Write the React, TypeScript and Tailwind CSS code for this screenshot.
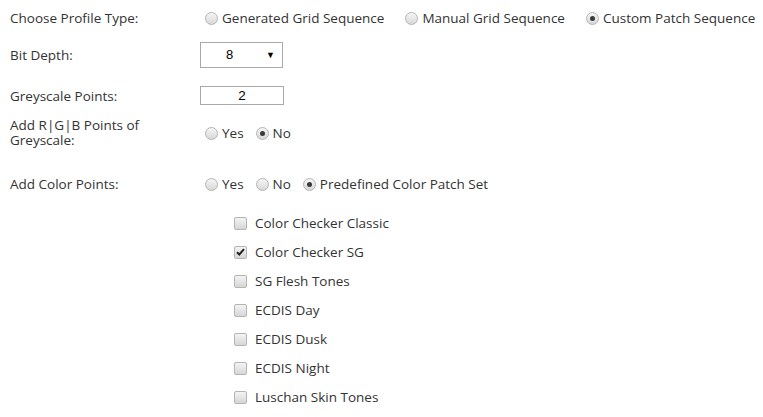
import React from "react";

function Radio({ checked }: { checked?: boolean }) {
  return (
    <span className="relative inline-block w-[13px] h-[13px] rounded-full border border-[#b4b4b4] bg-gradient-to-b from-[#f6f6f6] to-[#d8d8d8] shrink-0">
      {checked && (
        <span className="absolute left-[3px] top-[3px] w-[5px] h-[5px] rounded-full bg-[#3a3a3a]" />
      )}
    </span>
  );
}

function Check({ checked }: { checked?: boolean }) {
  return (
    <span className="relative inline-flex items-center justify-center w-[13px] h-[13px] rounded-[2px] border border-[#b4b4b4] bg-gradient-to-b from-[#f4f4f4] to-[#d6d6d6] shrink-0">
      {checked && (
        <svg width="9" height="8" viewBox="0 0 9 8">
          <path d="M1 4.2 L3.3 6.5 L8 1.2" stroke="#222" strokeWidth="2" fill="none" />
        </svg>
      )}
    </span>
  );
}

function RadioOpt({ label, checked, gap }: { label: string; checked?: boolean; gap: string }) {
  return (
    <span className={`inline-flex items-center gap-[4px] ${gap}`}>
      <Radio checked={checked} />
      <span>{label}</span>
    </span>
  );
}

export default function App() {
  const checks = [
    ["Color Checker Classic", false],
    ["Color Checker SG", true],
    ["SG Flesh Tones", false],
    ["ECDIS Day", false],
    ["ECDIS Dusk", false],
    ["ECDIS Night", false],
    ["Luschan Skin Tones", false],
  ] as const;
  return (
    <div className="w-[763px] h-[417px] bg-white text-[#333] text-[13.5px] leading-[16px] overflow-hidden" style={{ fontFamily: "'Segoe UI','Open Sans',sans-serif" }}>
      <div className="pl-[10px] pt-[10px]">
        <div className="flex items-center h-[16px]">
          <div className="w-[195px]">Choose Profile Type:</div>
          <RadioOpt label="Generated Grid Sequence" gap="mr-[21px]" />
          <RadioOpt label="Manual Grid Sequence" gap="mr-[21px]" />
          <RadioOpt label="Custom Patch Sequence" checked gap="" />
        </div>
        <div className="flex items-center mt-[16px] h-[26px]">
          <div className="w-[190px]">Bit Depth:</div>
          <div className="relative w-[83px] h-[26px] border border-[#a9a9a9] bg-white flex items-center" style={{ fontFamily: "'Liberation Sans',Arial,sans-serif" }}>
            <span className="absolute left-[25px] text-[13px] text-black">8</span>
            <span className="absolute right-[7px] text-[9px] text-black">▼</span>
          </div>
        </div>
        <div className="flex items-center mt-[18px] h-[19px]">
          <div className="w-[190px]">Greyscale Points:</div>
          <div className="w-[84px] h-[19px] border border-[#a9a9a9] bg-white flex items-center justify-center text-black" style={{ fontFamily: "'Liberation Sans',Arial,sans-serif" }}>
            2
          </div>
        </div>
        <div className="flex items-center mt-[13px]">
          <div className="w-[195px] flex flex-col">
            <div className="h-[15px] leading-[15px]">Add R|G|B Points of</div>
            <div className="h-[15px] leading-[15px]">Greyscale:</div>
          </div>
          <RadioOpt label="Yes" gap="mr-[12px]" />
          <RadioOpt label="No" checked gap="" />
        </div>
        <div className="flex items-center mt-[28px] h-[16px]">
          <div className="w-[195px]">Add Color Points:</div>
          <RadioOpt label="Yes" gap="mr-[12px]" />
          <RadioOpt label="No" gap="mr-[12px]" />
          <RadioOpt label="Predefined Color Patch Set" checked gap="" />
        </div>
        <div className="flex flex-col pl-[224px] mt-[23px] gap-[13px]">
          {checks.map(([l, c]) => (
            <div key={l} className="flex items-center gap-[8px] h-[16px]">
              <Check checked={c} />
              <span>{l}</span>
            </div>
          ))}
        </div>
      </div>
    </div>
  );
}
